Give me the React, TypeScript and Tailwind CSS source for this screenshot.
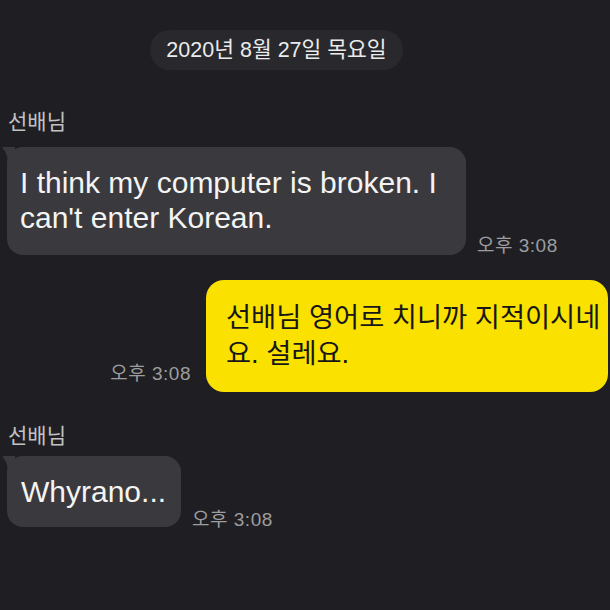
import React from "react";

function Tail({ color }: { color: string }) {
  // little kakao-style tail on the top-left corner of a bubble
  return (
    <svg
      className="absolute -left-[6px] top-0"
      width="14"
      height="14"
      viewBox="0 0 14 14"
    >
      <path d="M14 0 L2 0 Q1 0 2 1.5 Q6 6 7 14 L14 14 Z" fill={color} />
    </svg>
  );
}

function Time({ className = "" }: { className?: string }) {
  return (
    <span
      className={`text-[19px] leading-none tracking-[0.5px] text-[#9d9d9f] whitespace-nowrap ${className}`}
    >
      오후 3:08
    </span>
  );
}

export default function App() {
  return (
    <div className="w-[610px] h-[610px] overflow-hidden bg-[#1f1f23] font-['Liberation_Sans','Noto_Sans_CJK_KR',sans-serif]">
      <div className="pt-[30px] pl-[150px]">
        <div className="w-[253px] h-[40px] rounded-full bg-[#29292d] flex items-center justify-center text-[21.5px] text-[#ebebeb] whitespace-nowrap">
          2020년 8월 27일 목요일
        </div>
      </div>

      <div className="pl-[8px] mt-[40px] text-[21px] leading-[24px] text-[#c2c2c4]">
        선배님
      </div>

      <div className="flex items-end pl-[7px] mt-[13px]">
        <div className="relative w-[459px] rounded-[16px] bg-[#3a3a3e] pt-[18px] pb-[20px] px-[13px] text-[30px] leading-[35px] text-[#f4f4f4] whitespace-nowrap">
          <Tail color="#3a3a3e" />
          I think my computer is broken. I
          <br />
          can't enter Korean.
        </div>
        <Time className="ml-[11px]" />
      </div>

      <div className="flex items-end justify-end pr-[2px] mt-[25px]">
        <Time className="mr-[15px] mb-[9px]" />
        <div className="w-[402px] rounded-[18px] bg-[#fae100] pt-[20px] pb-[20px] pl-[20px] pr-[4px] text-[27.3px] leading-[36px] text-[#161616] whitespace-nowrap">
          선배님 영어로 치니까 지적이시네
          <br />
          요. 설레요.
        </div>
      </div>

      <div className="pl-[8px] mt-[32px] text-[21px] leading-[24px] text-[#c2c2c4]">
        선배님
      </div>

      <div className="flex items-end pl-[7px] mt-[8px]">
        <div className="relative rounded-[16px] bg-[#3a3a3e] pt-[18px] pb-[18px] pl-[14px] pr-[15px] text-[30px] leading-[35px] text-[#f4f4f4] whitespace-nowrap">
          <Tail color="#3a3a3e" />
          Whyrano...
        </div>
        <Time className="ml-[11px] -mb-[2px]" />
      </div>
    </div>
  );
}
